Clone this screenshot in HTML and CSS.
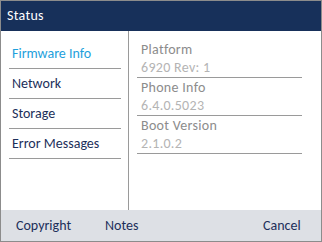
FILE: index.html
```
<!DOCTYPE html>
<html lang="en">
<head>
  <meta charset="utf-8" />
  <title>Status</title>
  <link rel="stylesheet" href="styles.css">
</head>
<body>
<div class="screen">
  <div class="title">Status</div>
  <div class="main">
    <ul class="menu">
      <li class="sel">Firmware Info</li>
      <li>Network</li>
      <li>Storage</li>
      <li>Error Messages</li>
    </ul>
    <div class="info">
      <div class="row"><div class="label">Platform</div><div class="value">6920 Rev: 1</div></div>
      <div class="row"><div class="label">Phone Info</div><div class="value">6.4.0.5023</div></div>
      <div class="row"><div class="label">Boot Version</div><div class="value">2.1.0.2</div></div>
    </div>
  </div>
  <div class="keys">
    <span class="k1">Copyright</span>
    <span class="k2">Notes</span>
    <span class="k3">Cancel</span>
  </div>
</div>
</body>
</html>
```
FILE: styles.css
```
*{margin:0;padding:0;box-sizing:border-box;}
body{width:322px;height:242px;overflow:hidden;font-family:Carlito,"Liberation Sans",sans-serif;font-size:14px;}
.screen{width:322px;height:242px;border:1px solid #8c8c8c;display:flex;flex-direction:column;background:#fff;}
.title{height:30px;background:#17305a;color:#fff;padding-left:6px;line-height:29px;letter-spacing:0.3px;}
.main{flex:1;display:flex;}
.menu{width:128px;border-right:1px solid #9a9a9a;list-style:none;padding:8px 0 0 8px;}
.menu li{width:112px;height:30px;line-height:29px;border-bottom:1px solid #9a9a9a;padding-left:3px;color:#1c2f5a;}
.menu li.sel{color:#1ea0dc;}
.info{flex:1;padding:9px 0 0 8px;}
.row{width:165px;height:38px;border-bottom:1px solid #9a9a9a;padding-left:4px;letter-spacing:0.3px;}
.label{height:19px;line-height:19px;color:#8c8c8c;}
.value{height:18px;line-height:18px;color:#b4b4b4;}
.keys{height:31px;background:#dde0e5;display:flex;align-items:center;color:#1c2f5a;}
.k1{margin-left:15px;width:89px;}
.k2{width:158px;}
```
